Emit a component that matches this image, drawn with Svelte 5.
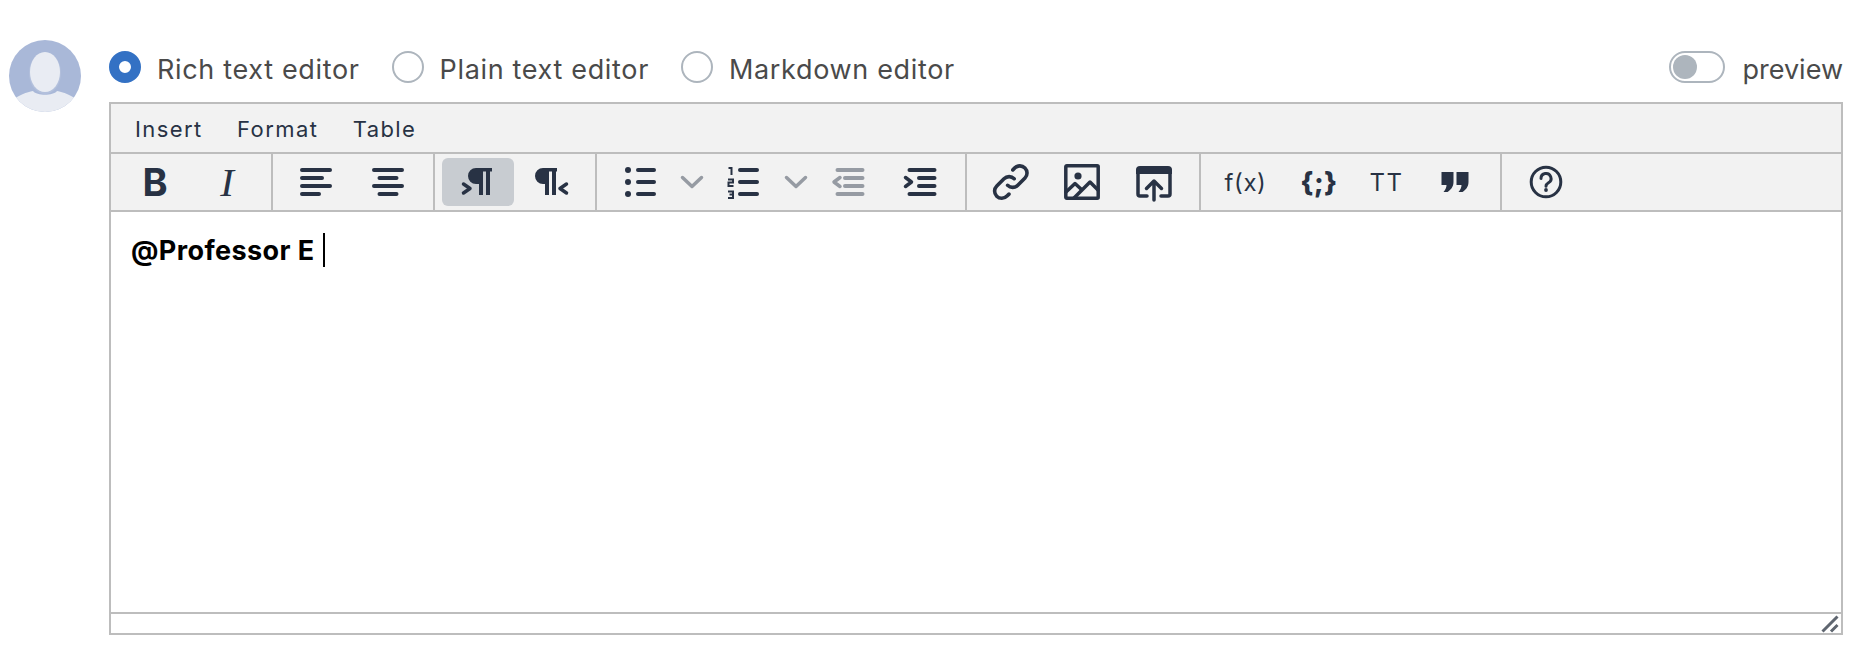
<script>
  let editor = $state("rich");
  let preview = $state(false);
  const modes = [
    { id: "rich", label: "Rich text editor" },
    { id: "plain", label: "Plain text editor" },
    { id: "markdown", label: "Markdown editor" },
  ];
</script>

<div class="page">
  <svg class="avatar" viewBox="0 0 72 72" width="72" height="72">
    <defs>
      <clipPath id="avatar-clip"><circle cx="36" cy="36" r="36" /></clipPath>
    </defs>
    <g clip-path="url(#avatar-clip)">
      <rect width="72" height="72" fill="#a9b8d8" />
      <path d="M0 62C10 55 18 52 24 51C28 56 44 56 48 51C54 52 62 55 72 62V72H0Z" fill="#e9ecf3" />
      <ellipse cx="36" cy="33" rx="16" ry="21" fill="#b3c0dc" />
      <ellipse cx="36" cy="32" rx="15" ry="20" fill="#e9ecf3" />
    </g>
  </svg>

  <div class="main">
    <div class="modes">
      {#each modes as m}
        <button class="mode" onclick={() => (editor = m.id)}>
          <span class="radio" class:on={editor === m.id}></span>
          <span class="mode-label">{m.label}</span>
        </button>
      {/each}
      <button class="toggle-wrap" onclick={() => (preview = !preview)}>
        <span class="toggle"><span class="knob"></span></span>
        <span class="preview-label">preview</span>
      </button>
    </div>

    <div class="editor">
      <div class="menubar">
        <span>Insert</span>
        <span>Format</span>
        <span>Table</span>
      </div>

      <div class="toolbar">
        <div class="group first">
          <button class="tool txt bold">B</button>
          <button class="tool txt ital">I</button>
        </div>

        <div class="group">
          <button class="tool" aria-label="align left">
            <svg viewBox="0 0 40 40" class="line">
              <path d="M6 8h28M6 16h20M6 24h28M6 32h17" />
            </svg>
          </button>
          <button class="tool" aria-label="align center">
            <svg viewBox="0 0 40 40" class="line">
              <path d="M6 8h28M11.5 16h17M6 24h28M11.5 32h17" />
            </svg>
          </button>
        </div>

        <div class="group">
          <button class="tool active" aria-label="left to right">
            <svg viewBox="0 0 40 40">
              <path class="solid" d="M18 6H34V9.5H32V33H28V9.5H25V33H21V22H18A8 8 0 0 1 18 6Z" />
              <polyline class="stroke" points="5.5,22 12,26.5 5.5,31" />
            </svg>
          </button>
          <button class="tool" aria-label="right to left">
            <svg viewBox="0 0 40 40">
              <path class="solid" d="M13 6H27V9.5H26V33H22V9.5H19V33H15V22H13A8 8 0 0 1 13 6Z" />
              <polyline class="stroke" points="36.5,22 30,26.5 36.5,31" />
            </svg>
          </button>
        </div>

        <div class="group">
          <button class="tool" aria-label="bullet list">
            <svg viewBox="0 0 40 40" class="line">
              <path d="M18 8h16M18 20h16M18 32h16" />
              <circle class="solid" cx="8" cy="8" r="3" />
              <circle class="solid" cx="8" cy="20" r="3" />
              <circle class="solid" cx="8" cy="32" r="3" />
            </svg>
          </button>
          <button class="tool chev" aria-label="more">
            <svg viewBox="0 0 32 40"><polyline class="stroke grey" points="6.5,15.5 16,24.5 25.5,15.5" /></svg>
          </button>
          <button class="tool" aria-label="numbered list">
            <svg viewBox="0 0 40 40" class="line">
              <path d="M16 8h17M16 20h17M16 32h17" />
              <path class="num" d="M4.5 6H7.5V13M4 17.5H9V20.5H4.5V24H9.5M4 29.5H9V32.5H5.5M9 32.5V36H4" />
            </svg>
          </button>
          <button class="tool chev" aria-label="more">
            <svg viewBox="0 0 32 40"><polyline class="stroke grey" points="6.5,15.5 16,24.5 25.5,15.5" /></svg>
          </button>
          <button class="tool" aria-label="outdent">
            <svg viewBox="0 0 40 40" class="line muted">
              <path d="M9.5 8h25M17 16h17.5M17 24h17.5M9.5 32h25" />
              <polyline class="stroke grey" points="12,15.5 6,20 12,24.5" />
            </svg>
          </button>
          <button class="tool" aria-label="indent">
            <svg viewBox="0 0 40 40" class="line">
              <path d="M9.5 8h25M19 16h15.5M19 24h15.5M9.5 32h25" />
              <polyline class="stroke" points="5.5,15.5 11.5,20 5.5,24.5" />
            </svg>
          </button>
        </div>

        <div class="group">
          <button class="tool" aria-label="link">
            <svg viewBox="0.4 0.9 22.2 22.2" class="link">
              <path d="M13.828 10.172a4 4 0 00-5.656 0l-4 4a4 4 0 105.656 5.656l1.102-1.101m-.758-4.899a4 4 0 005.656 0l4-4a4 4 0 00-5.656-5.656l-1.1 1.1" />
            </svg>
          </button>
          <button class="tool" aria-label="image">
            <svg viewBox="0 0 40 40">
              <rect class="stroke" x="3.8" y="3.8" width="32.4" height="32.4" rx="1" />
              <circle class="solid" cx="16" cy="14" r="3.6" />
              <polyline class="stroke" points="4,30 13,21.5 19.5,27.5" />
              <polyline class="stroke" points="12,36 28,20 36,28" />
            </svg>
          </button>
          <button class="tool" aria-label="upload">
            <svg viewBox="0 0 40 40">
              <path class="solid" d="M2 8a4 4 0 0 1 4-4h28a4 4 0 0 1 4 4v4H2Z" />
              <path class="stroke" d="M13 34H6a2 2 0 0 1-2-2V8h32v24a2 2 0 0 1-2 2h-7" />
              <path class="stroke" d="M20 38V19M12.5 26.5L20 19L27.5 26.5" />
            </svg>
          </button>
        </div>

        <div class="group">
          <button class="tool txt fx">f(x)</button>
          <button class="tool txt code">{"{;}"}</button>
          <button class="tool txt tt">TT</button>
          <button class="tool quote" aria-label="quote">
            <svg viewBox="0 0 40 40">
              <path class="solid" d="M8.5 10H20.5V20C20.5 25 17.5 28 14.5 30H10.5C12.5 28 13.5 25 13.5 23H8.5Z" />
              <path class="solid" d="M23.5 10H35.5V20C35.5 25 32.5 28 29.5 30H25.5C27.5 28 28.5 25 28.5 23H23.5Z" />
            </svg>
          </button>
        </div>

        <div class="group last">
          <button class="tool" aria-label="help">
            <svg viewBox="0 0 40 40">
              <circle class="stroke thin" cx="21" cy="20" r="14.8" />
              <path class="stroke thin" d="M16 16.5a5 5 0 1 1 7.5 4.3c-1.6 1-2.5 1.7-2.5 3.4" />
              <circle class="solid" cx="21" cy="28" r="1.9" />
            </svg>
          </button>
        </div>
      </div>

      <div class="content">
        <strong>@Professor E</strong><span class="caret"></span>
      </div>

      <div class="statusbar">
        <svg viewBox="0 0 18 18" width="18" height="18">
          <path d="M1.5 16.5L16.5 1.5M10 16.5L16.5 10" />
        </svg>
      </div>
    </div>
  </div>
</div>

<style>
  :global(body) {
    margin: 0;
    background: #fff;
  }

  .page {
    display: flex;
    align-items: flex-start;
    gap: 28px;
    padding: 40px 15px 0 9px;
    font-family: Inter, "Liberation Sans", sans-serif;
  }

  .avatar {
    flex: none;
  }

  .main {
    flex: 1;
    min-width: 0;
  }

  button {
    background: none;
    border: none;
    padding: 0;
    margin: 0;
    font: inherit;
    color: inherit;
    cursor: pointer;
  }

  .modes {
    display: flex;
    align-items: center;
    height: 32px;
    margin-top: 11px;
    margin-bottom: 19px;
    color: #4a4a4a;
  }

  .mode-label {
    padding-top: 5px;
    font-size: 27px;
    letter-spacing: 0.66px;
  }

  .preview-label {
    padding-top: 5px;
    font-size: 27px;
  }

  .mode {
    display: flex;
    align-items: center;
    gap: 16px;
    margin-right: 32px;
  }

  .radio {
    width: 32px;
    height: 32px;
    box-sizing: border-box;
    border-radius: 50%;
    border: 2px solid #adb5bd;
    background: #fff;
  }

  .radio.on {
    border: 10px solid #3371c4;
  }

  .toggle-wrap {
    display: flex;
    align-items: center;
    gap: 17px;
    margin-left: auto;
  }

  .toggle {
    display: block;
    box-sizing: border-box;
    width: 56px;
    height: 32px;
    padding: 2px;
    border-radius: 16px;
    border: 2px solid #adb5bd;
  }

  .knob {
    display: block;
    width: 24px;
    height: 24px;
    border-radius: 50%;
    background: #adb5bd;
  }

  .editor {
    display: flex;
    flex-direction: column;
    box-sizing: border-box;
    height: 533px;
    border: 2px solid #bdbdbd;
    color: #283244;
  }

  .menubar {
    display: flex;
    align-items: center;
    gap: 34.5px;
    height: 47px;
    padding-top: 1px;
    padding-left: 24px;
    background: #f2f2f2;
    border-bottom: 2px solid #bdbdbd;
    font-size: 22px;
    letter-spacing: 1.4px;
  }

  .toolbar {
    display: flex;
    height: 56px;
    background: #f2f2f2;
    border-bottom: 2px solid #bdbdbd;
  }

  .group {
    display: flex;
    align-items: center;
    padding: 0 9px 0 7px;
    border-right: 2px solid #bdbdbd;
  }

  .group.first {
    padding: 0 8px;
  }

  .group.last {
    border-right: none;
  }

  .tool {
    display: flex;
    align-items: center;
    justify-content: center;
    width: 72px;
    height: 48px;
    border-radius: 6px;
  }

  .tool.active {
    background: #c8ccd1;
  }

  .tool.chev {
    width: 32px;
  }

  .tool svg {
    width: 40px;
    height: 40px;
    display: block;
  }

  .tool.chev svg {
    width: 32px;
  }

  .txt {
    color: #283244;
  }

  .bold {
    font-size: 38px;
    font-weight: 700;
  }

  .ital {
    font-family: "Liberation Serif", serif;
    font-style: italic;
    font-size: 41px;
  }

  .fx {
    font-size: 24px;
    letter-spacing: 0.6px;
    padding-left: 3px;
  }

  .code {
    width: 78px;
    font-size: 27px;
    font-weight: 800;
    letter-spacing: 0.5px;
  }

  .tt {
    width: 57px;
    font-size: 24px;
    letter-spacing: 1.5px;
  }

  .quote {
    width: 76px;
  }

  .line path {
    fill: none;
    stroke: #283244;
    stroke-width: 4;
    stroke-linecap: round;
  }

  .line.muted path {
    stroke: #969ba3;
  }

  .line path.num {
    stroke-width: 2;
    stroke-linecap: butt;
  }

  .solid {
    fill: #283244;
  }

  .stroke {
    fill: none;
    stroke: #283244;
    stroke-width: 3.5;
    stroke-linecap: round;
    stroke-linejoin: round;
  }

  .stroke.grey {
    stroke: #969ba3;
  }

  .stroke.thin {
    stroke-width: 3;
  }

  .link path {
    fill: none;
    stroke: #283244;
    stroke-width: 2;
    stroke-linecap: round;
    stroke-linejoin: round;
  }

  .content {
    flex: 1;
    display: flex;
    align-items: flex-start;
    padding: 21px 20px;
    color: #000;
    font-size: 27px;
    line-height: 34px;
    letter-spacing: 0.4px;
  }

  .content strong {
    font-weight: 700;
    padding-top: 1px;
  }

  .caret {
    width: 2px;
    height: 34px;
    margin-left: 9px;
    background: #000;
  }

  .statusbar {
    display: flex;
    justify-content: flex-end;
    align-items: center;
    height: 19px;
    padding-right: 2px;
    border-top: 2px solid #bdbdbd;
  }

  .statusbar path {
    fill: none;
    stroke: #5f6670;
    stroke-width: 3;
  }
</style>
